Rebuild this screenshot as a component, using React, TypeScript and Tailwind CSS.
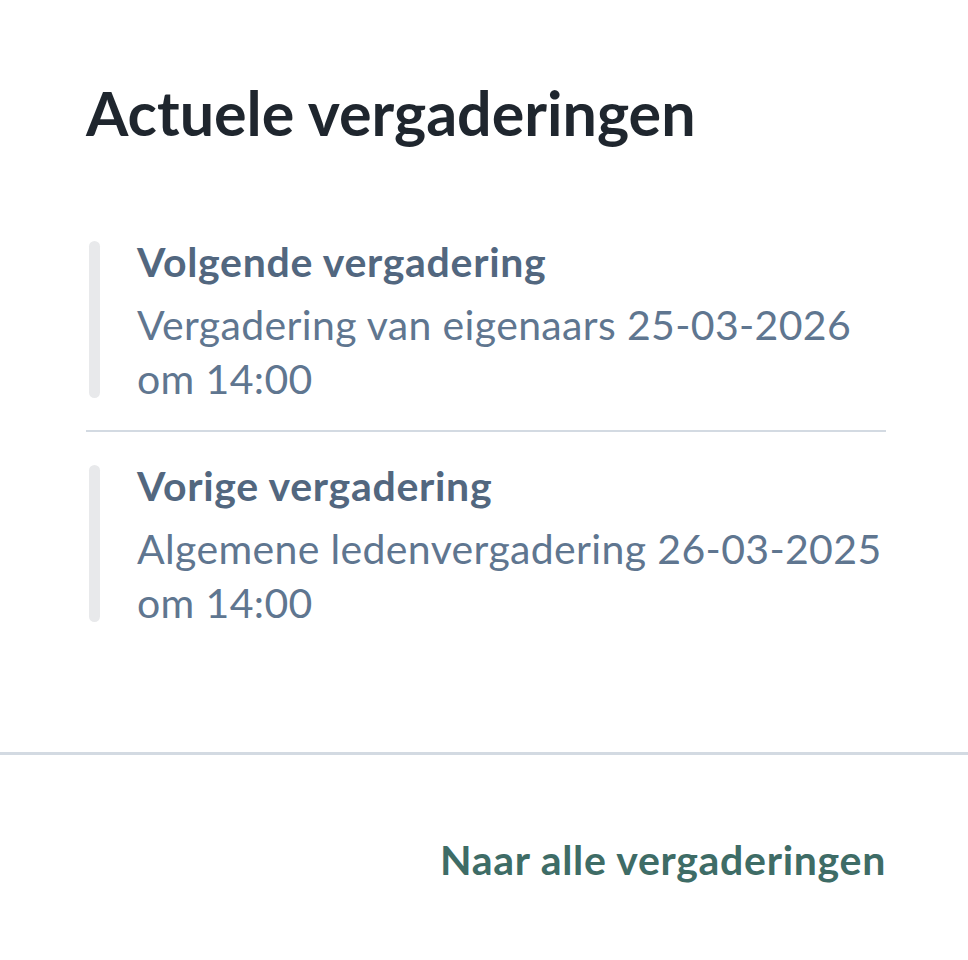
import React from 'react'

const items = [
  { title: 'Volgende vergadering', text: 'Vergadering van eigenaars 25-03-2026 om 14:00' },
  { title: 'Vorige vergadering', text: 'Algemene ledenvergadering 26-03-2025 om 14:00' },
]

export default function App() {
  return (
    <div className="min-h-screen bg-white" style={{ fontFamily: 'Lato, "Open Sans", sans-serif' }}>
      <div className="pl-[86px] pr-[82px] pt-[77px] pb-[130px]">
        <h1 className="text-[61px] leading-[72px] font-bold text-[#1f262e]">Actuele vergaderingen</h1>
        <div className="mt-[92px]">
          {items.map((item, i) => (
            <div
              key={item.title}
              className={i > 0 ? 'border-t-2 border-[#d3dae2] pt-[33px]' : 'pb-[32px]'}
            >
              <div className="flex">
                <div className="ml-[3px] w-[11px] shrink-0 rounded-full bg-[#e8e9eb]" />
                <div className="pl-[37px] -mt-[6px] -mb-[8px]">
                  <h3 className="text-[41px] leading-[54px] font-bold tracking-[0.7px] text-[#52677f]">
                    {item.title}
                  </h3>
                  <p className="mt-[9px] text-[41px] leading-[54px] tracking-[0.35px] text-[#5f7690]">
                    {item.text}
                  </p>
                </div>
              </div>
            </div>
          ))}
        </div>
      </div>
      <div className="h-[3px] bg-[#d3dae2]" />
      <div className="flex justify-end px-[82px] pt-[78px]">
        <a href="#" className="text-[41px] leading-[54px] font-bold tracking-[0.7px] text-[#3e6c66]">
          Naar alle vergaderingen
        </a>
      </div>
    </div>
  )
}
